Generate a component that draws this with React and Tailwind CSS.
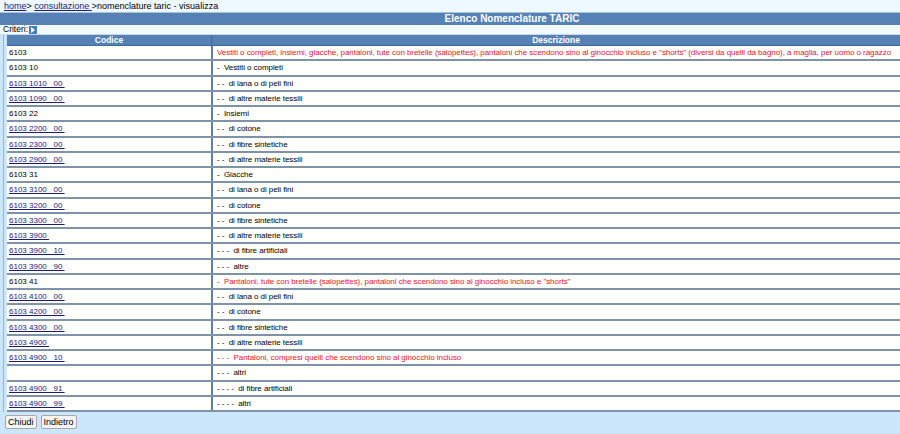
import React from "react";

const rows = [
  { c: "6103", d: "Vestiti o completi, insiemi, giacche, pantaloni, tute con bretelle (salopettes), pantaloni che scendono sino al ginocchio incluso e \"shorts\" (diversi da quelli da bagno), a maglia, per uomo o ragazzo", red: true, link: false },
  { c: "6103 10", d: "-  Vestiti o completi" },
  { c: "6103 1010   00 ", d: "- -  di lana o di peli fini", link: true },
  { c: "6103 1090   00 ", d: "- -  di altre materie tessili", link: true },
  { c: "6103 22", d: "-  Insiemi" },
  { c: "6103 2200   00 ", d: "- -  di cotone", link: true },
  { c: "6103 2300   00 ", d: "- -  di fibre sintetiche", link: true },
  { c: "6103 2900   00 ", d: "- -  di altre materie tessili", link: true },
  { c: "6103 31", d: "-  Giacche" },
  { c: "6103 3100   00 ", d: "- -  di lana o di peli fini", link: true },
  { c: "6103 3200   00 ", d: "- -  di cotone", link: true },
  { c: "6103 3300   00 ", d: "- -  di fibre sintetiche", link: true },
  { c: "6103 3900 ", d: "- -  di altre materie tessili", link: true },
  { c: "6103 3900   10 ", d: "- - -  di fibre artificiali", link: true },
  { c: "6103 3900   90 ", d: "- - -  altre", link: true },
  { c: "6103 41", d: "-  Pantaloni, tute con bretelle (salopettes), pantaloni che scendono sino al ginocchio incluso e \"shorts\"", red: true },
  { c: "6103 4100   00 ", d: "- -  di lana o di peli fini", link: true },
  { c: "6103 4200   00 ", d: "- -  di cotone", link: true },
  { c: "6103 4300   00 ", d: "- -  di fibre sintetiche", link: true },
  { c: "6103 4900 ", d: "- -  di altre materie tessili", link: true },
  { c: "6103 4900   10 ", d: "- - -  Pantaloni, compresi quelli che scendono sino al ginocchio incluso", link: true, red: true },
  { c: "", d: "- - -  altri" },
  { c: "6103 4900   91 ", d: "- - - -  di fibre artificiali", link: true },
  { c: "6103 4900   99 ", d: "- - - -  altri", link: true },
];

export default function App() {
  return (
    <div className="w-[900px] h-[434px] bg-[#cce6fc] text-[8px] leading-none text-black overflow-hidden" style={{ fontFamily: '"Liberation Sans", Arial, sans-serif' }}>
      <div className="h-[13px] bg-[#eef8ff] border-b border-[#a9c3dc] flex items-center px-[4px] whitespace-pre text-[9px]">
        <span className="text-[#1a1a80] underline">home</span>
        <span>{"> "}</span>
        <span className="text-[#1a1a80] underline">{"consultazione "}</span>
        <span>{">nomenclature taric - visualizza"}</span>
      </div>
      <div className="h-[12px] bg-[#5581b4] text-white font-bold text-[10px] flex items-center justify-center pl-[124px]">
        Elenco Nomenclature TARIC
      </div>
      <div className="h-[10px] bg-[#f2f9ff] flex items-center px-[3px] border-b border-[#c7d9ea] text-[8.5px]">
        <span>Criteri:</span>
        <span className="ml-[1px] w-[8px] h-[8px] bg-[#3f7fc0] flex items-center justify-center">
          <svg width="6" height="6" viewBox="0 0 6 6"><path d="M1 0 L5 3 L1 6 Z" fill="#fff" /></svg>
        </span>
      </div>
      <div className="ml-[3px] pl-[3px] border-l border-[#9ab4cc] bg-[#cce6fc]">
        <div className="flex h-[11px] bg-[#5581b4] text-white font-bold text-[8.5px] border-b border-[#3d6a9c]">
          <div className="w-[204px] shrink-0 flex items-center justify-center">Codice</div>
          <div className="w-px bg-[#3d6a9c]"></div>
          <div className="flex-1 flex items-center justify-center">Descrizione</div>
        </div>
        {rows.map((r, i) => (
          <div key={i} className={`flex ${i % 4 === 1 ? "h-[16px]" : "h-[15px]"} bg-[#fffffb] border-b-2 border-[#7e92a8]`}>
            <div className="w-[204px] shrink-0 flex items-center pl-[2px] whitespace-pre">
              {r.link ? <span className="text-[#1a1a80] underline">{r.c}</span> : <span>{r.c}</span>}
            </div>
            <div className="w-[2px] shrink-0 bg-[#5f7fa6]"></div>
            <div className={`flex-1 min-w-0 flex items-center pl-[4px] whitespace-pre tracking-[-0.06px] ${r.red ? "text-[#e8142e]" : ""}`}>
              {r.d}
            </div>
          </div>
        ))}
      </div>
      <div className="flex gap-[4px] pt-[3px] pl-[5px]">
        <button className="h-[14px] px-[2px] bg-[#f4f4f4] border border-[#a8a8a8] rounded-[2px] text-[9px] leading-none">Chiudi</button>
        <button className="h-[14px] px-[2px] bg-[#f4f4f4] border border-[#a8a8a8] rounded-[2px] text-[9px] leading-none">Indietro</button>
      </div>
    </div>
  );
}
